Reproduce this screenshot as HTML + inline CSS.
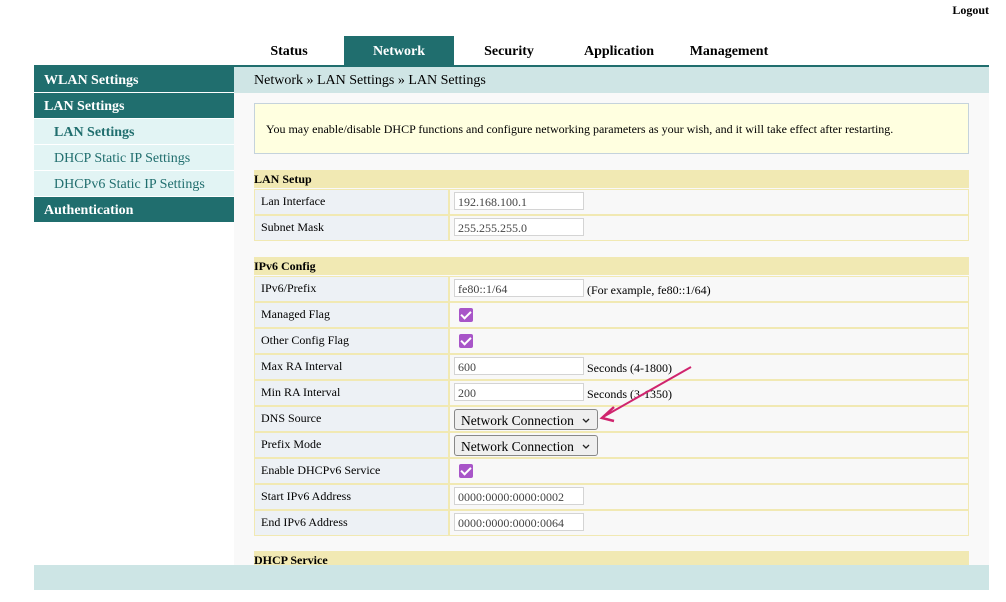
<!DOCTYPE html><html><head><style>
body{margin:0;width:1006px;height:602px;background:#fff;font-family:"Liberation Serif",serif;position:relative;overflow:hidden;color:#000}
.a{position:absolute}
.tab{position:absolute;top:36px;height:29px;line-height:31px;font-weight:bold;font-size:14px;text-align:center}
.side{position:absolute;left:34px;width:200px;height:25px;line-height:28px;font-size:14px}
.dk{background:#206e6e;color:#fff;font-weight:bold;padding-left:10px;width:190px}
.lt{background:#e2f4f4;color:#206e6e;padding-left:20px;width:180px}
.hd{position:absolute;left:254px;width:715px;height:18px;background:#f1e9b3;font-size:12px;font-weight:bold;line-height:19px}
.row{position:absolute;left:254px;width:713px;height:24px;border:1px solid #f1e9b3;background:#f8f8f8;font-size:12px}
.lb{position:absolute;left:0;top:0;height:24px;background:#edf1f5;border-right:2px solid #f1e9b3;line-height:23px;padding-left:6px;box-sizing:border-box;width:195px}
.in{position:absolute;left:199px;top:2px;height:18px;border:1px solid #d4d4d4;background:#fff;color:#444;line-height:19px;padding-left:3px;box-sizing:border-box;width:130px}
.tx{position:absolute;left:332px;top:1px;line-height:24px}
.cb{position:absolute;left:204px;top:5px;width:14px;height:14px;background:#a855c8;border-radius:2px}
.cb:after{content:"";position:absolute;left:4px;top:1px;width:4px;height:8px;border:solid #fff;border-width:0 2px 2px 0;transform:rotate(45deg)}
.sel{position:absolute;left:199px;top:2px;width:144px;height:21px;border:1px solid #888;border-radius:3px;background:#efefef;font-size:13.5px;line-height:21px;padding-left:6px;box-sizing:border-box}
</style></head><body>
<div class="a" style="right:17px;top:3px;font-weight:bold;font-size:12px">Logout</div>
<div class="tab" style="left:234px;width:110px">Status</div>
<div class="tab" style="left:344px;width:110px;background:#206e6e;color:#fff">Network</div>
<div class="tab" style="left:454px;width:110px">Security</div>
<div class="tab" style="left:564px;width:110px">Application</div>
<div class="tab" style="left:674px;width:110px">Management</div>
<div class="a" style="left:34px;top:65px;width:955px;height:2px;background:#206e6e"></div>
<div class="side dk" style="top:67px">WLAN Settings</div>
<div class="side dk" style="top:93px">LAN Settings</div>
<div class="side lt" style="top:119px;font-weight:bold">LAN Settings</div>
<div class="side lt" style="top:145px">DHCP Static IP Settings</div>
<div class="side lt" style="top:171px">DHCPv6 Static IP Settings</div>
<div class="side dk" style="top:197px">Authentication</div>
<div class="a" style="left:234px;top:67px;width:755px;height:26px;background:#cfe5e5;font-size:14px;line-height:28px;padding-left:20px;box-sizing:border-box">Network » LAN Settings » LAN Settings</div>
<div class="a" style="left:234px;top:93px;width:755px;height:472px;background:#f9f9f9"></div>
<div class="a" style="left:254px;top:103px;height:49px;background:#ffffe0;border:1px solid #c5d3dc;font-size:12px;line-height:51px;padding-left:11px;width:702px">You may enable/disable DHCP functions and configure networking parameters as your wish, and it will take effect after restarting.</div>
<div class="hd" style="top:170px">LAN Setup</div>
<div class="row" style="top:189px"><div class="lb">Lan Interface</div><div class="in">192.168.100.1</div></div>
<div class="row" style="top:215px"><div class="lb">Subnet Mask</div><div class="in">255.255.255.0</div></div>
<div class="hd" style="top:257px">IPv6 Config</div>
<div class="row" style="top:276px"><div class="lb">IPv6/Prefix</div><div class="in">fe80::1/64</div><div class="tx">(For example, fe80::1/64)</div></div>
<div class="row" style="top:302px"><div class="lb">Managed Flag</div><div class="cb"></div></div>
<div class="row" style="top:328px"><div class="lb">Other Config Flag</div><div class="cb"></div></div>
<div class="row" style="top:354px"><div class="lb">Max RA Interval</div><div class="in">600</div><div class="tx">Seconds (4-1800)</div></div>
<div class="row" style="top:380px"><div class="lb">Min RA Interval</div><div class="in">200</div><div class="tx">Seconds (3-1350)</div></div>
<div class="row" style="top:406px"><div class="lb">DNS Source</div><div class="sel">Network Connection<svg style="position:absolute;right:7px;top:8px" width="8" height="5"><path d="M1 1 L4 4 L7 1" stroke="#222" stroke-width="1.3" fill="none"/></svg></div></div>
<div class="row" style="top:432px"><div class="lb">Prefix Mode</div><div class="sel">Network Connection<svg style="position:absolute;right:7px;top:8px" width="8" height="5"><path d="M1 1 L4 4 L7 1" stroke="#222" stroke-width="1.3" fill="none"/></svg></div></div>
<div class="row" style="top:458px"><div class="lb">Enable DHCPv6 Service</div><div class="cb"></div></div>
<div class="row" style="top:484px"><div class="lb">Start IPv6 Address</div><div class="in">0000:0000:0000:0002</div></div>
<div class="row" style="top:510px"><div class="lb">End IPv6 Address</div><div class="in">0000:0000:0000:0064</div></div>
<div class="hd" style="top:551px;height:14px;overflow:hidden">DHCP Service</div>
<div class="a" style="left:34px;top:565px;width:955px;height:25px;background:#cde5e5"></div>
<svg class="a" style="left:0;top:0" width="1006" height="602"><path d="M691 367 L603 417" stroke="#d0246e" stroke-width="2" fill="none"/><path d="M614 407 L602 418 L614 421" stroke="#d0246e" stroke-width="2.5" fill="none"/></svg>
</body></html>
